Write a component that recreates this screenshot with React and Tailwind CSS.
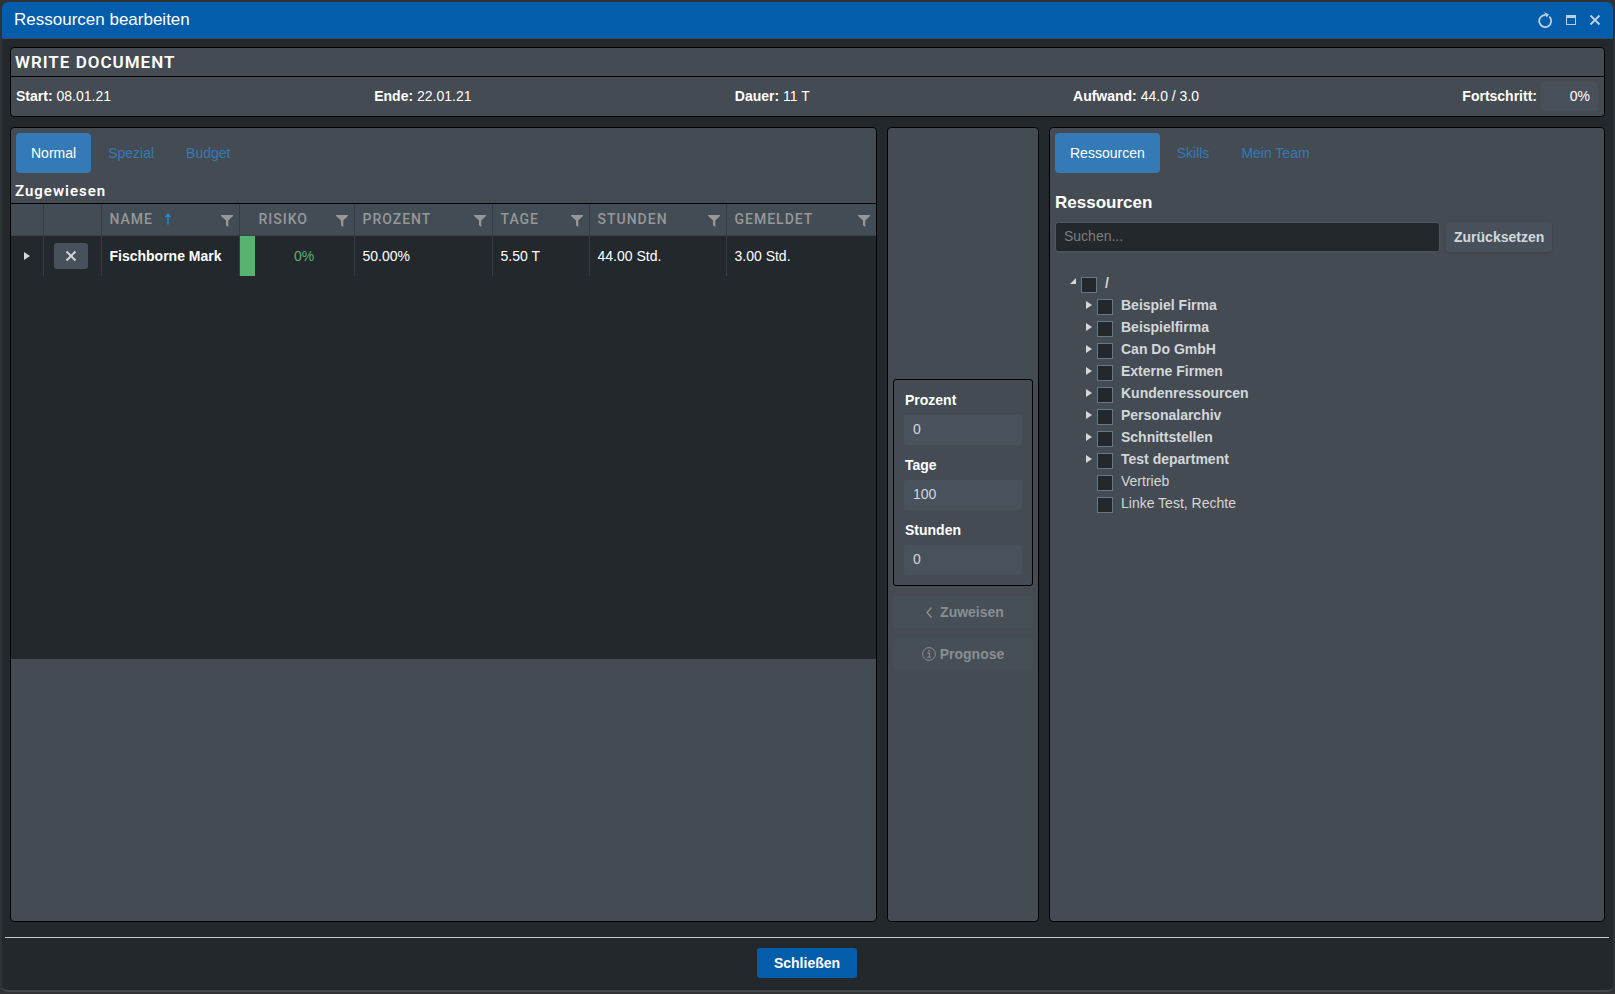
import React, { useState } from 'react';
import clsx from 'clsx';

const columns = [
  { id: 'name', label: 'Name', width: 'w-[138px]', sorted: true },
  { id: 'risk', label: 'Risiko', width: 'w-[115px]', inset: true },
  { id: 'percent', label: 'Prozent', width: 'w-[138px]' },
  { id: 'days', label: 'Tage', width: 'w-[97px]' },
  { id: 'hours', label: 'Stunden', width: 'w-[137px]' },
  { id: 'reported', label: 'Gemeldet', width: 'w-auto' }
];

const assignments = [
  {
    name: 'Fischborne Mark',
    risk: '0%',
    percent: '50.00%',
    days: '5.50 T',
    hours: '44.00 Std.',
    reported: '3.00 Std.'
  }
];

const taskFacts = [
  { label: 'Start:', value: '08.01.21' },
  { label: 'Ende:', value: '22.01.21' },
  { label: 'Dauer:', value: '11 T' },
  { label: 'Aufwand:', value: '44.0 / 3.0' }
];

const resourceTree = [
  { label: 'Beispiel Firma', group: true },
  { label: 'Beispielfirma', group: true },
  { label: 'Can Do GmbH', group: true },
  { label: 'Externe Firmen', group: true },
  { label: 'Kundenressourcen', group: true },
  { label: 'Personalarchiv', group: true },
  { label: 'Schnittstellen', group: true },
  { label: 'Test department', group: true },
  { label: 'Vertrieb' },
  { label: 'Linke Test, Rechte' }
];

// Icons
const ReloadIcon = () => (
  <svg className="w-4 h-4" viewBox="0 0 16 16" fill="none" stroke="currentColor" strokeWidth="1.8">
    <path d="M12.3 4.6A6 6 0 1 1 8.4 3" />
    <path d="M7.2 0L12 2.6L9.6 5.6L8.6 3.4Z" fill="currentColor" stroke="none" />
  </svg>
);

const MaximizeIcon = () => (
  <svg className="w-3 h-3" viewBox="0 0 12 12">
    <path fill="currentColor" fillRule="evenodd" d="M1 1H11V11H1ZM2 4V10H10V4Z" />
  </svg>
);

const CrossIcon = () => (
  <svg className="w-3 h-3" viewBox="0 0 12 12" fill="none" stroke="currentColor" strokeWidth="1.9">
    <path d="M1.5 1.5L10.5 10.5M10.5 1.5L1.5 10.5" />
  </svg>
);

const FilterIcon = () => (
  <svg className="w-3 h-3" viewBox="0 0 12 12" fill="currentColor">
    <path d="M0 0H12V1L7.3 5.5V12L5 10.3V5.5L0 1Z" />
  </svg>
);

const SortAscIcon = () => (
  <svg className="w-2 h-3" viewBox="0 0 8 12" fill="none" stroke="#1a8fd8" strokeWidth="1.4">
    <path d="M4 11.5V1.5" />
    <path d="M0.8 4H7.2L4 0.3Z" fill="#1a8fd8" stroke="none" />
  </svg>
);

const ChevronLeftIcon = () => (
  <svg className="w-3.5 h-3.5" viewBox="0 0 14 14" fill="none" stroke="currentColor" strokeWidth="1.4">
    <path d="M9.5 2.5L5 7.5L9.5 12.5" />
  </svg>
);

const InfoIcon = () => (
  <svg className="w-3.5 h-3.5" viewBox="0 0 14 14" fill="none" stroke="currentColor" strokeWidth="1">
    <circle cx="7" cy="7" r="6.4" />
    <path d="M5.2 6H7.4V10.2M5.2 10.3H9" strokeWidth="1.1" />
    <path d="M6.3 3H7.8V4.5H6.3Z" fill="currentColor" stroke="none" />
  </svg>
);

const CollapsedIcon = () => (
  <svg className="w-1.5 h-2" viewBox="0 0 6 8" fill="currentColor">
    <path d="M0 0L6 4L0 8Z" />
  </svg>
);

const ExpandedIcon = () => (
  <svg className="w-1.5 h-1.5" viewBox="0 0 6 6" fill="currentColor">
    <path d="M6 0V6H0Z" />
  </svg>
);

const Tabs = ({ tabs }) => {
  const [active, setActive] = useState(tabs[0]);

  return (
    <div role="tablist" className="flex gap-0.5">
      {tabs.map((tab) => (
        <button
          key={tab}
          role="tab"
          aria-selected={tab === active}
          onClick={() => setActive(tab)}
          className={clsx(
            'h-10 px-[15px] rounded text-sm',
            tab === active ? 'bg-[#337ab7] text-white' : 'text-[#337ab7]'
          )}
        >
          {tab}
        </button>
      ))}
    </div>
  );
};

const NumberField = ({ id, label, initial }) => (
  <div>
    <label htmlFor={id} className="block h-[25px] px-px text-sm leading-5 font-bold">
      {label}
    </label>
    <input
      id={id}
      defaultValue={initial}
      className="block w-full h-[30px] px-[9px] pb-0.5 rounded-[3px] bg-[#48525c] text-sm text-[#d3d7da]"
    />
  </div>
);

const TreeCheckbox = (props) => (
  <input
    type="checkbox"
    className="appearance-none shrink-0 w-4 h-4 mt-[5px] border border-[#65798a] bg-[#23282c] checked:bg-[#337ab7]"
    {...props}
  />
);

const AssignedTable = () => (
  <table className="w-full table-fixed border-collapse text-sm text-left">
    <thead>
      <tr className="h-[31px] bg-[#424c54] border-b border-[#38434b] font-['Roboto',sans-serif] text-[#979797]">
        <th className="w-8 border-r border-[#343d44]" />
        <th className="w-[58px] border-r border-[#343d44]" />
        {columns.map((col) => (
          <th
            key={col.id}
            className={clsx(col.width, 'p-0 border-r border-[#343d44] last:border-r-0 font-medium')}
          >
            <div className={clsx('flex items-center pr-1.5', col.inset ? 'pl-[19px]' : 'pl-2')}>
              <span className="uppercase tracking-[1px]">{col.label}</span>
              {col.sorted && (
                <span className="ml-[11px]">
                  <SortAscIcon />
                </span>
              )}
              <button aria-label={`${col.label} filtern`} className="ml-auto mt-1">
                <FilterIcon />
              </button>
            </div>
          </th>
        ))}
      </tr>
    </thead>
    <tbody>
      {assignments.map((row) => (
        <tr key={row.name} className="h-10">
          <td className="p-0 border-r border-[#343d44]">
            <button aria-label="Aufklappen" className="flex w-full justify-center text-[#d3d7da]">
              <CollapsedIcon />
            </button>
          </td>
          <td className="p-0 border-r border-[#343d44]">
            <button
              aria-label="Entfernen"
              className="flex w-[34px] h-[26px] ml-2.5 items-center justify-center rounded-[3px] bg-[#48515b] text-[#d3d7da]"
            >
              <CrossIcon />
            </button>
          </td>
          <td className="p-0 pl-2 border-r border-[#343d44] font-bold whitespace-nowrap">{row.name}</td>
          <td className="p-0 border-r border-[#343d44]">
            <div className="flex h-10 items-center">
              <span className="w-[15px] h-full bg-[#56b370]" />
              <span className="flex-1 text-center text-[#56b370]">{row.risk}</span>
            </div>
          </td>
          <td className="p-0 pl-2 border-r border-[#343d44]">{row.percent}</td>
          <td className="p-0 pl-2 border-r border-[#343d44]">{row.days}</td>
          <td className="p-0 pl-2 border-r border-[#343d44]">{row.hours}</td>
          <td className="p-0 pl-2">{row.reported}</td>
        </tr>
      ))}
    </tbody>
  </table>
);

const ResourceTree = () => (
  <ul className="mt-5 pl-[15px] text-sm leading-[22px] text-[#d3d7da]">
    <li>
      <div className="flex h-[22px]">
        <span className="flex w-[11px] pt-1.5">
          <ExpandedIcon />
        </span>
        <TreeCheckbox id="node-root" />
        <label htmlFor="node-root" className="pl-2 font-bold">
          /
        </label>
      </div>
      <ul className="pl-4">
        {resourceTree.map((node, index) => (
          <li key={node.label} className="flex h-[22px]">
            <span className="flex w-[11px] pt-[7px]">{node.group && <CollapsedIcon />}</span>
            <TreeCheckbox id={`node-${index}`} />
            <label htmlFor={`node-${index}`} className={clsx('pl-2', node.group && 'font-bold')}>
              {node.label}
            </label>
          </li>
        ))}
      </ul>
    </li>
  </ul>
);

const App = () => {
  return (
    <div className="h-screen p-0.5 bg-[#2f3336] font-['Liberation_Sans',Arial,sans-serif] text-sm text-white">
      <div className="flex flex-col h-full rounded-md overflow-hidden border-b-2 border-[#43474b] bg-[#23282c]">
        {/* Title bar */}
        <header className="flex shrink-0 h-[37px] items-center justify-between pl-3 pr-3 border-b border-[#3b4a57] bg-[#035daa]">
          <h1 className="text-[17px]">Ressourcen bearbeiten</h1>
          <div className="flex items-center gap-3 text-[#b9d0e6]">
            <button aria-label="Neu laden"><ReloadIcon /></button>
            <button aria-label="Maximieren"><MaximizeIcon /></button>
            <button aria-label="Fenster schließen"><CrossIcon /></button>
          </div>
        </header>

        <main className="flex flex-col flex-1 min-h-0 gap-2.5 px-2 pt-2">
          {/* Task summary */}
          <section className="shrink-0 rounded border border-black bg-[#454b52]">
            <h2 className="h-7 px-1 font-['Roboto',sans-serif] text-[17px] leading-[29px] font-semibold uppercase tracking-[1px]">
              Write document
            </h2>
            <div className="flex h-10 items-center justify-between pb-px pl-[5px] pr-1.5 border-t border-black">
              {taskFacts.map((fact) => (
                <span key={fact.label}>
                  <b>{fact.label}</b> {fact.value}
                </span>
              ))}
              <span className="flex items-center gap-1">
                <label htmlFor="progress" className="font-bold">Fortschritt:</label>
                <input
                  id="progress"
                  defaultValue="0%"
                  className="w-[57px] h-[29px] px-2 rounded-[3px] bg-[#48515b] text-right"
                />
              </span>
            </div>
          </section>

          <div className="flex flex-1 min-h-0 gap-2.5">
            {/* Assigned resources */}
            <section className="flex flex-col flex-1 min-w-0 rounded border border-black bg-[#454b52]">
              <div className="px-[5px] pt-[5px]">
                <Tabs tabs={['Normal', 'Spezial', 'Budget']} />
              </div>
              <h3 className="h-[30px] pt-1.5 px-1 font-['Roboto',sans-serif] text-[15px] leading-6 font-semibold tracking-[1px]">
                Zugewiesen
              </h3>
              <div className="h-[456px] border-t border-black bg-[#23282c]">
                <AssignedTable />
              </div>
            </section>

            {/* Amount and actions */}
            <section className="flex flex-col w-[152px] shrink-0 justify-center gap-2.5 px-[5px] rounded border border-black bg-[#454b52]">
              <div className="flex flex-col gap-2.5 p-2.5 rounded-[3px] border border-black">
                <NumberField id="percent" label="Prozent" initial="0" />
                <NumberField id="days" label="Tage" initial="100" />
                <NumberField id="hours" label="Stunden" initial="0" />
              </div>
              <button disabled className="flex h-8 items-center justify-center gap-1 rounded-[3px] bg-[#464e56] font-bold text-[#898e93]">
                <ChevronLeftIcon /> Zuweisen
              </button>
              <button disabled className="flex h-8 items-center justify-center gap-1 rounded-[3px] bg-[#464e56] font-bold text-[#898e93]">
                <InfoIcon /> Prognose
              </button>
            </section>

            {/* Resource pool */}
            <section className="w-[556px] shrink-0 px-[5px] pt-[5px] rounded border border-black bg-[#454b52]">
              <Tabs tabs={['Ressourcen', 'Skills', 'Mein Team']} />
              <h3 className="mt-5 text-[17px] leading-5 font-bold">Ressourcen</h3>
              <div className="flex mt-[9px] items-center gap-1.5">
                <input
                  type="search"
                  aria-label="Ressourcen suchen"
                  placeholder="Suchen..."
                  className="w-[385px] h-[30px] px-2 pb-0.5 rounded-[3px] border border-[#4b5761] bg-[#23282c] placeholder:text-[#7d7d7d]"
                />
                <button className="h-[30px] px-2 rounded-[3px] bg-[#48515b] font-bold text-[#d3d7da] shadow-sm">
                  Zurücksetzen
                </button>
              </div>
              <ResourceTree />
            </section>
          </div>
        </main>

        <footer className="flex shrink-0 h-[53px] mt-[15px] ml-[3px] mr-1 pt-2.5 items-start justify-center border-t border-[#c8cacb]">
          <button className="h-[30px] w-[100px] rounded-[3px] bg-[#035daa] font-bold">Schließen</button>
        </footer>
      </div>
    </div>
  );
};

export default App;
